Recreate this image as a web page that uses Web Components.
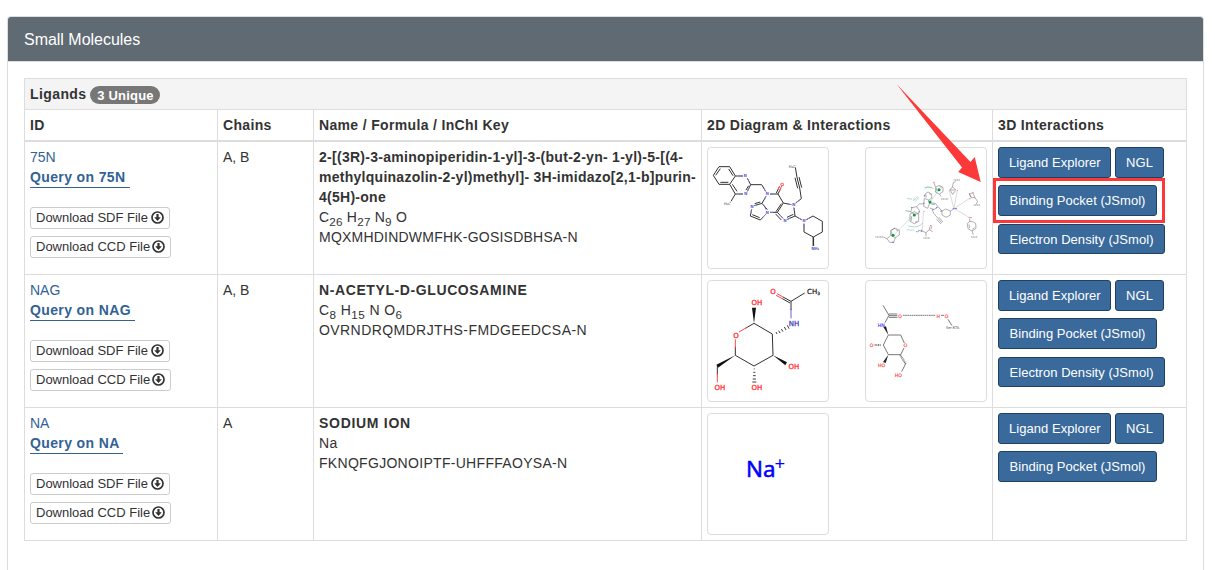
<!DOCTYPE html>
<html lang="en">
<head>
<meta charset="utf-8">
<title>Small Molecules</title>
<style>
body {
    margin: 0;
    padding: 16px 0 0 7px;
    height: 554px;
    overflow: hidden;
    background: #fff;
    color: #333;
    font: 14px/20px "Liberation Sans", Arial, sans-serif;
}
</style>
</head>
<body>
<molecule-panel>
    <span slot="title">Small Molecules</span>
    <ligand-table>
        <span slot="caption">Ligands</span>
        <count-badge slot="caption">3 Unique</count-badge>
        <ligand-row code="75N" chains="A, B" diagram="n75" interaction="n75-pocket" density marked style="--name-spacing: .27px; --key-spacing: .22px">
            <span slot="name"><span style="letter-spacing: .28px">2-[(3R)-3-aminopiperidin-1-yl]-3-(but-2-yn- 1-yl)-5-[(4-</span><br>methylquinazolin-2-yl)methyl]- 3H-imidazo[2,1-b]purin-<br>4(5H)-one</span>
            <span slot="formula">C<sub>26</sub> H<sub>27</sub> N<sub>9</sub> O</span>
            <span slot="key">MQXMHDINDWMFHK-GOSISDBHSA-N</span>
        </ligand-row>
        <ligand-row code="NAG" chains="A, B" diagram="nag" interaction="nag-pocket" density style="--name-spacing: .6px; --key-spacing: .42px">
            <span slot="name">N-ACETYL-D-GLUCOSAMINE</span>
            <span slot="formula">C<sub>8</sub> H<sub>15</sub> N O<sub>6</sub></span>
            <span slot="key">OVRNDRQMDRJTHS-FMDGEEDCSA-N</span>
        </ligand-row>
        <ligand-row code="NA" chains="A" diagram="na" style="--name-spacing: .7px; --key-spacing: .3px">
            <span slot="name">SODIUM ION</span>
            <span slot="formula">Na</span>
            <span slot="key">FKNQFGJONOIPTF-UHFFFAOYSA-N</span>
        </ligand-row>
    </ligand-table>
</molecule-panel>
<arrow-pointer></arrow-pointer>

<script>
const attach = (host, html) => {
    const template = document.createElement('template');
    template.innerHTML = html;
    host.attachShadow({ mode: 'open' }).appendChild(template.content.cloneNode(true));
};

class MoleculePanel extends HTMLElement {
    constructor() {
        super();
        attach(this, `
<style>
:host {
    display: block;
    box-sizing: border-box;
    width: 1197px;
    height: 554px;
    border: 1px solid #ddd;
    border-bottom: 0;
    border-radius: 4px 4px 0 0;
}
.heading {
    padding: 12px 16px;
    height: 20px;
    background: #5f6a73;
    border-bottom: 1px solid #ddd;
    border-radius: 3px 3px 0 0;
    color: #fff;
    font-size: 16px;
    line-height: 21px;
    letter-spacing: -.02px;
}
.body {
    padding: 16px;
}
</style>
<div class="heading"><slot name="title"></slot></div>
<div class="body"><slot></slot></div>`);
    }
}

class CountBadge extends HTMLElement {
    constructor() {
        super();
        attach(this, `
<style>
:host {
    display: inline-block;
    box-sizing: border-box;
    width: 70px;
    height: 18px;
    border-radius: 9px;
    background: #777;
    color: #fff;
    font-size: 13px;
    font-weight: bold;
    line-height: 19px;
    letter-spacing: .2px;
    text-align: center;
}
</style>
<slot></slot>`);
    }
}

class LigandTable extends HTMLElement {
    constructor() {
        super();
        attach(this, `
<style>
:host {
    display: block;
    width: 1162px;
    border: 1px solid #ddd;
    border-width: 1px 0 0 1px;
    --columns: 193px 96px 388px 291px 194px;
}
.caption {
    display: flex;
    align-items: flex-start;
    gap: 4px;
    height: 25px;
    padding: 5px 5px 0;
    border: 1px solid #ddd;
    border-width: 0 1px 1px 0;
    background: #f4f4f4;
    font-weight: bold;
    letter-spacing: .4px;
}
::slotted(count-badge) {
    margin-top: 2px;
}
.head {
    display: grid;
    grid-template-columns: var(--columns);
    border-bottom: 2px solid #ddd;
    font-weight: bold;
    letter-spacing: .34px;
}
.head div {
    height: 20px;
    padding: 5px;
    border-right: 1px solid #ddd;
}
</style>
<div class="caption"><slot name="caption"></slot></div>
<div class="head">
    <div>ID</div>
    <div>Chains</div>
    <div>Name / Formula / InChI Key</div>
    <div>2D Diagram &amp; Interactions</div>
    <div>3D Interactions</div>
</div>
<slot></slot>`);
    }
}

class DownloadButton extends HTMLElement {
    constructor() {
        super();
        attach(this, `
<style>
:host {
    display: flex;
    box-sizing: border-box;
    align-items: center;
    justify-content: space-between;
    width: 140px;
    height: 22px;
    padding: 0 5px;
    border: 1px solid #ccc;
    border-radius: 3px;
    font-size: 13px;
    white-space: nowrap;
}
:host([wide]) {
    width: 141px;
}
svg {
    flex: none;
    width: 13px;
    height: 13px;
    margin-top: -1px;
}
</style>
<span><slot></slot></span>
<svg viewBox="0 0 13 13">
    <circle cx="6.5" cy="6.5" r="5.5" fill="none" stroke="#333" stroke-width="1.7"/>
    <path d="M5.4 3h2.2v3.2h2.2L6.5 10 3.2 6.2h2.2z" fill="#333"/>
</svg>`);
    }
}

class ViewButton extends HTMLElement {
    constructor() {
        super();
        attach(this, `
<style>
:host {
    display: block;
    box-sizing: border-box;
    height: 31px;
    padding: 0 10px;
    border: 1px solid #204162;
    border-radius: 3px;
    background: #3a6a9c;
    color: #fff;
    font-size: 13px;
    line-height: 29px;
    letter-spacing: .04px;
    text-align: center;
    white-space: nowrap;
}
</style>
<slot></slot>`);
    }
}

// Drawings use a 360 unit square, three units to a pixel
const drawings = {
    'n75': `
<g fill="none" stroke="#333" stroke-width="3">
    <path d="M97 99L80 71H48L31 97L48 124H80L97 99H120M133 106L143 125L133 145M120 153H97L80 124M52 77L38 97M52 118H76M90 98L77 78M102 145L88 124M137 128L129 141M97 153L84 175"/>
    <path d="M143 125H176L188 145M201 153H225L241 180L223 208H201M193 200L177 181L189 160M225 153L234 134M220 150L229 131M177 181L154 188M172 177L155 182M146 199L142 219L172 231L188 214M148 215L170 224M241 180L265 185M235 182L219 206M223 208L240 226M218 213L235 231M253 229L276 219L273 194M252 223L271 214M278 180L295 167L290 135L282 103L277 73M284 136L276 104M296 134L288 102M276 219L296 230"/>
    <path d="M310 230L330 219L358 235V267L331 282L303 267V242"/>
    <path stroke-width="4.5" d="M331 282V309"/>
</g>
<g stroke="#7c7cd8" stroke-width="3" fill="none">
    <path d="M108 99H120M134 107L138 116M138 134L133 145M109 153H120M182 135L188 145M201 153H211M185 168L189 160M185 191L189 200M201 208H211M162 186L154 188M146 199L144 207M180 222L188 214M254 183L265 185M280 178L287 173M274 204L273 194M230 215L240 226M253 229L264 224M287 225L296 230M310 230L319 225M303 253V242"/>
</g>
<path d="M229 145L236 129M224 141L230 129" stroke="#ff5a5a" stroke-width="3"/>
<g font-size="12" fill="#4343c8" stroke="#4343c8" stroke-width=".5" text-anchor="middle">
    <text x="127" y="103">N</text><text x="128" y="157">N</text><text x="193" y="157">N</text><text x="147" y="194">N</text>
    <text x="193" y="212">N</text><text x="272" y="190">N</text><text x="246" y="236">N</text><text x="303" y="238">N</text>
    <text x="337" y="321">NH₂</text>
</g>
<text x="238" y="129" font-size="13" fill="#ff3030" stroke="#ff3030" stroke-width=".7" text-anchor="middle">O</text>
<g font-size="11" fill="#333"><text x="63" y="186">H₃C</text><text x="257" y="75">H₃C</text></g>`,

    'n75-pocket': `
<g fill="none" stroke="#7a7a7a" stroke-width="1.8">
    <path d="M102 255L115 262V276L103 284L89 277V263ZM92 265V275M104 259L111 264M89 263L102 255M89 277L78 287L86 298H98L103 284M78 287L67 282"/>
    <path d="M153 194L167 191L176 204L172 212L160 214L149 206ZM149 206L133 203M160 206L147 213V235L160 242L173 235V213ZM151 220V233M162 238L169 234M167 191L175 183L188 182"/>
    <path d="M192 159V153L201 147L212 153V166L202 171L190 166M195 155V164M204 151L209 155M202 171L206 180L200 196L188 190L190 166M206 180L223 181L231 191L219 200L206 195M211 184H222M231 191L243 204"/>
    <path d="M243 204L254 198L268 204V216L255 223L243 216ZM268 204L278 198"/>
    <path d="M214 200L218 211L230 225M230 225L243 240M227 229L240 243M234 223L246 237"/>
    <path d="M224 133L234 127L246 133V146L235 153L223 147ZM227 135V145M236 131L242 135M224 133L219 120M235 153L240 160"/>
    <path d="M277 120L274 132L267 141H284L275 132M269 144L275 154L283 144M276 120L284 115"/>
    <path d="M324 152L330 163L342 164L336 150ZM330 163L326 153M342 164L350 176L345 184"/>
    <path d="M326 227V236L319 242L321 257L333 264L345 256L344 241L333 235L326 236M324 244L326 255M334 259L341 254M333 264L337 275"/>
    <path d="M171 262L184 264L195 269V280M195 269L205 260L215 266M205 260L207 250M210 259L212 250"/>
</g>
<g fill="none" stroke="#aaa" stroke-width="1.3">
    <path d="M278 195L265 143M279 195L289 143M280 196L326 166M281 197L324 223M187 208L184 260"/>
</g>
<g fill="none" stroke="#69b990" stroke-width="1.5">
    <path d="M97 277L158 216M207 177L234 140" stroke-dasharray="3 1"/>
    <path d="M156 174L171 160M162 176L174 163M191 135L204 132L218 137M140 248C160 255 176 252 185 240"/>
    <path d="M138 168L144 165L147 169L154 167M156 169L161 167M190 132L195 135L200 131L207 135L213 131M138 262L143 259L148 263L154 260L160 263"/>
</g>
<g fill="#159447"><circle cx="96" cy="277" r="4.5"/><circle cx="160" cy="216" r="4.5"/><circle cx="207" cy="177" r="4.5"/><circle cx="234" cy="140" r="4.5"/></g>
<g fill="none" stroke="#888" stroke-width="2.6" stroke-dasharray="3 1 5 1">
    <path d="M43 282H66M240 168H262M278 111H298M338 186H358M187 285H207M330 282H350M165 266H173"/>
</g>
<g fill="none" stroke="#7777f0" stroke-width="3">
    <path d="M93 298H99M150 194H154M174 205V209M190 156V161M186 181H190M214 199H218M227 192V196M240 202V207M275 197H288M182 260V267"/>
</g>
<g fill="none" stroke="#ff8585" stroke-width="3">
    <path d="M187 205H191M216 118H221M264 142H268M287 142H291M324 167H329M334 148H338M323 224H333M207 248H212"/>
</g>`,

    'nag': `
<g fill="none" stroke="#222" stroke-width="2.8">
    <path d="M305 51L264 76L240 63M261 81L238 68M264 76V102M153 142L127 157M153 142L208 174L210 238L153 270L97 238V212M43 271V296"/>
</g>
<path d="M240 63L222 53M238 68L219 58M132 154L108 168M97 217V190M43 292V319" stroke="#ff3d3d" stroke-width="2.8"/>
<path d="M264 99V127" stroke="#5959c8" stroke-width="2.8"/>
<path d="M153 142L147 95H159ZM97 238L40 266L45 275ZM210 238L252 259L247 268Z" fill="#111"/>
<path d="M253 148L258 158M244 153L249 162M235 159L240 167M227 164L231 171M219 168L222 174M152 279H155M151 289H157M150 299H158M149 309H159M148 318H160" stroke="#222" stroke-width="2.6"/>
<g font-size="21" fill="#ff3030" stroke="#ff3030" stroke-width=".9" text-anchor="middle">
    <text x="210" y="54">O</text><text x="162" y="87">OH</text><text x="99" y="185">O</text><text x="273" y="278">OH</text>
    <text x="162" y="342">OH</text><text x="51" y="342">OH</text>
</g>
<text x="273" y="151" font-size="21" fill="#4747bd" stroke="#4747bd" stroke-width=".9" text-anchor="middle">NH</text>
<text x="312" y="54" font-size="21" fill="#222" stroke="#222" stroke-width=".7">CH<tspan font-size="13" dy="4">3</tspan></text>`,

    'nag-pocket': `
<g fill="none" stroke="#555" stroke-width="2.4">
    <path d="M66 88L84 118L72 140M84 114H109M84 119H109M84 124H109M82 177H119L130 201M82 177L67 207L82 236H119L129 216M134 263L122 287M261 130L273 149M240 118H249"/>
    <path d="M126 118H224" stroke-dasharray="5 1.5"/>
    <path d="M41 207H61" stroke-dasharray="3 2" stroke-width="4"/>
    <path d="M118 238L134 263" stroke-dasharray="2 2" stroke-width="6"/>
</g>
<path d="M82 177L67 153L75 151ZM82 236L66 258L74 261Z" fill="#222"/>
<g font-size="14" fill="#ff4b4b" stroke="#ff4b4b" stroke-width=".5" text-anchor="middle">
    <text x="117" y="125">O</text><text x="32" y="213">O</text><text x="133" y="214">O</text><text x="232" y="125">H</text><text x="257" y="125">O</text>
    <text x="62" y="273">HO</text><text x="112" y="303">HO</text>
</g>
<text x="61" y="154" font-size="14" fill="#4c4cff" stroke="#4c4cff" stroke-width=".5" text-anchor="middle">HN</text>
<text x="275" y="159" font-size="11" fill="#555" text-anchor="middle" textLength="40">Ser 87A</text>`,

    'na': `
<text x="129" y="203" font-size="67" fill="#00f" stroke="#00f" stroke-width="1.5" font-family="'Noto Sans', sans-serif">Na<tspan font-size="56" dx="-3" dy="-19" stroke-width="0">+</tspan></text>`
};

class LigandThumb extends HTMLElement {
    constructor() {
        super();
        attach(this, `
<style>
:host {
    display: block;
    width: 120px;
    height: 120px;
    border: 1px solid #ddd;
    border-radius: 4px;
}
svg {
    display: block;
    font-family: "DejaVu Sans", sans-serif;
}
</style>
<svg width="120" height="120" viewBox="15 15 360 360">${drawings[this.getAttribute('drawing')]}</svg>`);
    }
}

class LigandRow extends HTMLElement {
    constructor() {
        super();
        const code = this.getAttribute('code');
        const interaction = this.getAttribute('interaction');
        attach(this, `
<style>
:host {
    display: grid;
    grid-template-columns: var(--columns);
    height: 132px;
    border-bottom: 1px solid #ddd;
}
.cell {
    box-sizing: border-box;
    padding: 5px;
    border-right: 1px solid #ddd;
}
a {
    display: table;
    color: #326295;
    text-decoration: none;
}
.query {
    height: 17px;
    border-bottom: 1px solid #326295;
    font-weight: bold;
    letter-spacing: .37px;
    white-space: pre;
}
.downloads {
    display: grid;
    gap: 7px;
    margin-top: 19px;
}
.name {
    font-weight: bold;
    letter-spacing: var(--name-spacing);
    white-space: nowrap;
}
::slotted([slot="formula"]), ::slotted([slot="key"]) {
    display: block;
    height: 20px;
    letter-spacing: var(--key-spacing);
}
.thumbs {
    display: flex;
    gap: 36px;
}
.views {
    display: flex;
    flex-wrap: wrap;
    align-content: flex-start;
    gap: 7px 4px;
}
.explorer { width: 113px; }
.ngl { width: 49px; }
.pocket { width: 159px; }
.density { width: 167px; height: 30px; margin-top: 1px; }
.frame { position: relative; }
.frame::after {
    content: "";
    position: absolute;
    left: -5px;
    top: -7px;
    width: 166px;
    height: 39px;
    border: 3px solid #fd3838;
}
</style>
<div class="cell">
    <a>${code}</a>
    <a class="query">Query on ${code} </a>
    <div class="downloads">
        <download-button>Download SDF File</download-button>
        <download-button wide>Download CCD File</download-button>
    </div>
</div>
<div class="cell">${this.getAttribute('chains')}</div>
<div class="cell">
    <div class="name"><slot name="name"></slot></div>
    <slot name="formula"></slot>
    <slot name="key"></slot>
</div>
<div class="cell thumbs">
    <ligand-thumb drawing="${this.getAttribute('diagram')}"></ligand-thumb>
    ${interaction ? `<ligand-thumb drawing="${interaction}"></ligand-thumb>` : ''}
</div>
<div class="cell views">
    <view-button class="explorer">Ligand Explorer</view-button>
    <view-button class="ngl">NGL</view-button>
    <div class="${this.hasAttribute('marked') ? 'frame' : ''}"><view-button class="pocket">Binding Pocket (JSmol)</view-button></div>
    ${this.hasAttribute('density') ? '<view-button class="density">Electron Density (JSmol)</view-button>' : ''}
</div>`);
    }
}

class ArrowPointer extends HTMLElement {
    constructor() {
        super();
        attach(this, `
<style>
:host {
    position: absolute;
    left: 890px;
    top: 80px;
}
svg {
    display: block;
}
</style>
<svg width="100" height="110" viewBox="890 80 100 110">
    <path d="M896.5 84L970.5 162L974.7 157L980.7 182L958.2 172L962 167.5Z" fill="#fd3838"/>
</svg>`);
    }
}

customElements.define('view-button', ViewButton);
customElements.define('download-button', DownloadButton);
customElements.define('count-badge', CountBadge);

// the thumb reads its attribute while it is built, so it is upgraded after parsing
customElements.define('ligand-row', LigandRow);
customElements.define('ligand-thumb', LigandThumb);
customElements.define('ligand-table', LigandTable);
customElements.define('molecule-panel', MoleculePanel);
customElements.define('arrow-pointer', ArrowPointer);
</script>
</body>
</html>
